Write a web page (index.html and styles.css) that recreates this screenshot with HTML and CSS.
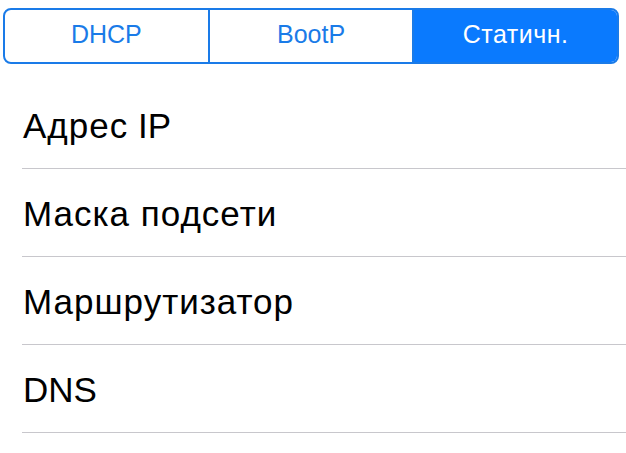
FILE: index.html
```html
<!DOCTYPE html>
<html lang="ru">
<head>
  <meta charset="UTF-8">
  <meta name="viewport" content="width=device-width, initial-scale=1.0">
  <title>IP</title>
  <link rel="stylesheet" href="styles.css">
</head>
<body>
  <div class="segments">
    <div class="segment">DHCP</div>
    <div class="segment">BootP</div>
    <div class="segment active">Статичн.</div>
  </div>

  <ul class="list">
    <li class="row"><span class="cyr">Адрес</span>&nbsp;IP</li>
    <li class="row"><span class="cyr">Маска подсети</span></li>
    <li class="row"><span class="cyr">Маршрутизатор</span></li>
    <li class="row">DNS</li>
  </ul>
</body>
</html>
```

FILE: styles.css
```css
/* IP settings */
body {
  margin: 0;
  background: #fff;
  font-family: 'Liberation Sans', Arial, sans-serif;
  color: #000;
}

.segments {
  display: flex;
  height: 52px;
  margin: 8px 7px 0 3px;
  border: 2px solid #1a7be8;
  border-radius: 8px;
  overflow: hidden;
}

.segment {
  flex: 1;
  display: flex;
  justify-content: center;
  align-items: center;
  padding-bottom: 3px;
  font-size: 25px;
  color: #1a7be8;
  border-left: 2px solid #1a7be8;
}

.segment:first-child {
  border-left: none;
}

.segment.active {
  background: #0a7afe;
  color: #fff;
  letter-spacing: 0.5px;
}

.list {
  list-style: none;
  margin: 17px 0 0 22px;
  padding: 0;
}

.row {
  height: 88px;
  display: flex;
  align-items: center;
  padding-left: 1px;
  padding-top: 2px;
  box-sizing: border-box;
  font-size: 35px;
  border-bottom: 1px solid #c8c7cc;
}

/* the cyrillic glyphs run wider in the original font */
.cyr {
  letter-spacing: 1px;
}
```
